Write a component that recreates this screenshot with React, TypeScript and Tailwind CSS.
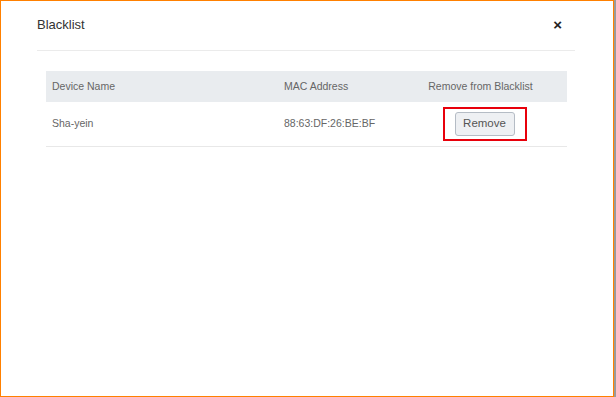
import React from 'react';

const rows = [{ name: 'Sha-yein', mac: '88:63:DF:26:BE:BF' }];

const App: React.FC = () => {
  return (
    <div
      className="w-[616px] h-[397px] bg-white flex"
      style={{ fontFamily: '"Liberation Sans", Arial, sans-serif' }}
    >
      {/* dialog frame */}
      <div className="flex-1 h-full border border-[#ff8000] border-r-0 flex flex-col">
        {/* header */}
        <div className="ml-[36px] mr-[38px] h-[50px] border-b border-[#ebebeb] flex items-center justify-between pb-[2px]">
          <span className="text-[13px] text-[#333] leading-none">Blacklist</span>
          <span className="text-[15px] font-bold text-[#222] leading-none mr-[13px]">×</span>
        </div>

        {/* table */}
        <div className="ml-[45px] mr-[46px] mt-[20px] text-[10.5px] text-[#666]">
          <div className="grid grid-cols-[232px_116px_1fr] h-[31px] items-center bg-[#e9ecef]">
            <div className="pl-[6px]">Device Name</div>
            <div className="pl-[6px]">MAC Address</div>
            <div className="text-center">Remove from Blacklist</div>
          </div>
          {rows.map((r) => (
            <div
              key={r.mac}
              className="grid grid-cols-[232px_116px_1fr] h-[45px] items-center border-b border-[#e8e8e8]"
            >
              <div className="pl-[6px]">{r.name}</div>
              <div className="pl-[6px]">{r.mac}</div>
              <div className="flex justify-center pl-[8px]">
                <div className="border-2 border-[#e8000b] w-[84px] h-[34px] flex items-center justify-center">
                  <button className="w-[60px] h-[24px] bg-[#eef0f3] border border-[#b5bcc5] rounded-[3px] text-[11.5px] text-[#555]">
                    Remove
                  </button>
                </div>
              </div>
            </div>
          ))}
        </div>
      </div>
      {/* right edge */}
      <div className="w-[3px] h-full flex">
        <div className="w-px h-full bg-[#ff8000]" />
        <div className="w-[2px] h-full bg-[#9a9a9a]" />
      </div>
    </div>
  );
};

export default App;
